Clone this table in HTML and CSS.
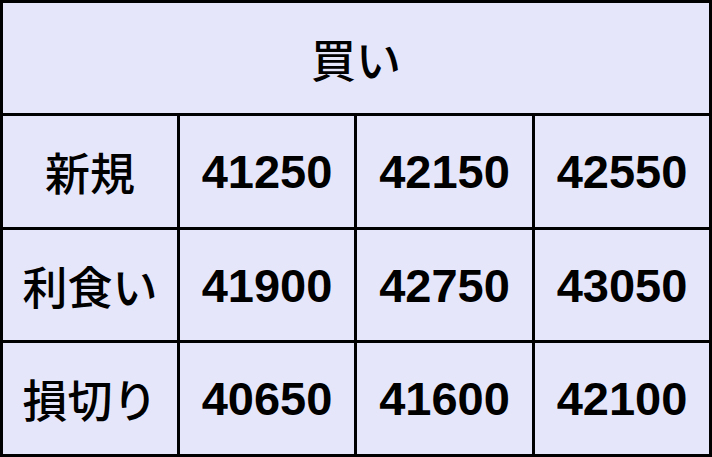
FILE: index.html
```html
<!DOCTYPE html>
<html lang="ja">
<head>
<meta charset="utf-8">
<title>買い</title>
<link rel="stylesheet" href="styles.css">
</head>
<body>
<div class="board">
  <div class="cell head">買い</div>
  <div class="cell label">新規</div>
  <div class="cell num">41250</div>
  <div class="cell num">42150</div>
  <div class="cell num">42550</div>
  <div class="cell label">利食い</div>
  <div class="cell num">41900</div>
  <div class="cell num">42750</div>
  <div class="cell num">43050</div>
  <div class="cell label">損切り</div>
  <div class="cell num">40650</div>
  <div class="cell num">41600</div>
  <div class="cell num">42100</div>
</div>
</body>
</html>
```
FILE: styles.css
```css
html, body {
  margin: 0;
  padding: 0;
  background: #e6e6fb;
}
.board {
  display: grid;
  grid-template-columns: 174px 174px 175px 174px;
  grid-template-rows: 110px 111px 110px 111px;
  gap: 3px;
  padding: 3px;
  width: 712px;
  height: 457px;
  box-sizing: border-box;
  background: #000;
}
.cell {
  background: #e6e6fb;
  display: flex;
  align-items: center;
  justify-content: center;
  color: #000;
  font-family: "Noto Sans CJK JP", sans-serif;
  font-size: 45px;
  font-weight: 500;
}
.head {
  grid-column: 1 / 5;
}
.num {
  font-family: "Liberation Sans", Arial, sans-serif;
  font-weight: bold;
  font-size: 47px;
}
```
